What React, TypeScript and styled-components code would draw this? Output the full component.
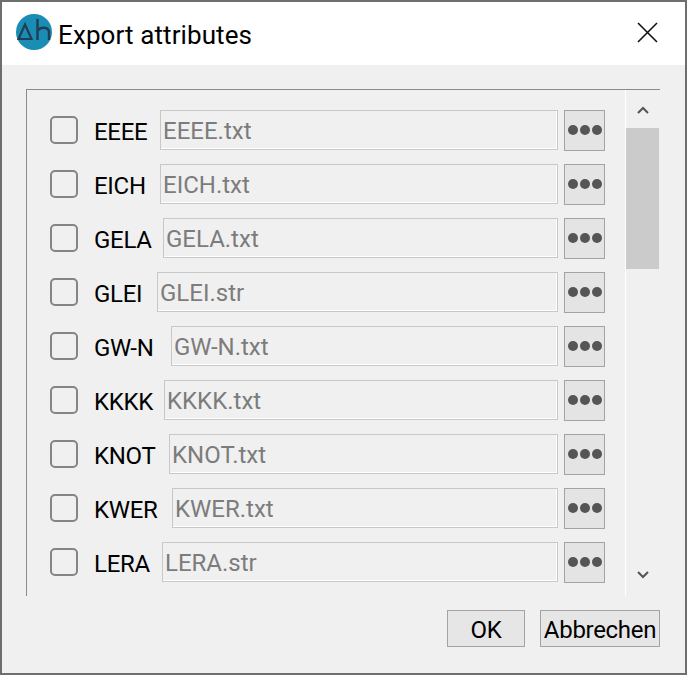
import styled, { createGlobalStyle } from 'styled-components'

const GlobalStyle = createGlobalStyle`
  html, body {
    margin: 0;
    padding: 0;
    background: #6e6e6e;
  }
  * {
    box-sizing: border-box;
  }
`

const Window = styled.div`
  width: 687px;
  height: 675px;
  border: 2px solid #6e6e6e;
  background: #f0f0f0;
  display: flex;
  flex-direction: column;
  overflow: hidden;
  font-family: 'Roboto', 'Noto Sans', sans-serif;
  color: #000;
`

const TitleBar = styled.div`
  height: 63px;
  flex: none;
  background: #fff;
  display: flex;
  align-items: center;
  padding: 0 27px 3px 14px;
  gap: 6px;
`

const Title = styled.span`
  flex: 1;
  font-size: 26px;
  letter-spacing: 0.1px;
  line-height: 32px;
  padding-top: 5px;
`

const Content = styled.div`
  flex: 1;
  min-height: 0;
  display: flex;
  flex-direction: column;
  padding: 24px 25px 0 24px;
`

const ScrollFrame = styled.div`
  height: 507px;
  flex: none;
  display: flex;
  border-top: 1px solid #8a8a94;
  border-left: 1px solid #8a8a94;
`

const List = styled.div`
  flex: 1;
  min-width: 0;
  display: flex;
  flex-direction: column;
  gap: 14px;
  padding: 20px 20px 0 23px;
  overflow: hidden;
`

const Row = styled.div`
  display: flex;
  align-items: center;
  height: 40px;
  flex: none;
`

const Check = styled.span`
  width: 28px;
  height: 28px;
  flex: none;
  border: 2px solid #858585;
  border-radius: 5px;
  margin-right: 16px;
`

const Label = styled.span<{ $width: number }>`
  width: ${({ $width }) => $width}px;
  flex: none;
  font-size: 24px;
  line-height: 30px;
  padding-top: 3px;
  letter-spacing: -0.3px;
  white-space: nowrap;
`

const PathInput = styled.div`
  flex: 1;
  min-width: 0;
  height: 40px;
  border: 1px solid #c8c8c8;
  box-shadow: inset -1px -1px 0 #fff;
  background: #f0f0f0;
  color: #7c7c7c;
  font-size: 24px;
  line-height: 41px;
  padding-left: 2px;
  margin-right: 6px;
`

const DotsButton = styled.div`
  width: 41px;
  height: 41px;
  flex: none;
  border: 1px solid #a3a3a3;
  background: #e4e4e4;
  display: flex;
  align-items: center;
  justify-content: center;
  gap: 2px;
`

const Dot = styled.span`
  width: 10px;
  height: 10px;
  border-radius: 50%;
  background: #555;
`

const ScrollBar = styled.div`
  width: 35px;
  flex: none;
  border-left: 1px solid #fff;
  padding-right: 1px;
  display: flex;
  flex-direction: column;
  align-items: center;
`

const ArrowSlot = styled.div<{ $pad: string }>`
  height: 38px;
  flex: none;
  width: 100%;
  display: flex;
  align-items: center;
  justify-content: center;
  padding: ${({ $pad }) => $pad};
`

const Thumb = styled.div`
  width: 100%;
  height: 141px;
  flex: none;
  background: #cbcbcb;
`

const Spacer = styled.div`
  flex: 1;
`

const Footer = styled.div`
  display: flex;
  justify-content: flex-end;
  gap: 15px;
  padding-top: 14px;
`

const DialogButton = styled.div<{ $width: number }>`
  width: ${({ $width }) => $width}px;
  height: 37px;
  border: 1px solid #a3a3a3;
  background: #e6e6e6;
  font-size: 24px;
  letter-spacing: -0.3px;
  line-height: 38px;
  text-align: center;
  white-space: nowrap;
`

const Logo = () => (
  <svg width="36" height="36" viewBox="0 0 36 36" style={{ flex: 'none' }}>
    <circle cx="18" cy="18" r="18" fill="#1a8db5" />
    <path d="M2.5 25 L9 10.5 L15.5 25 Z" fill="none" stroke="#1f3f55" strokeWidth="2.2" />
    <path d="M21.5 5 V26 M21.5 17 C24 12.5 33 12.5 33 18.5 V26" fill="none" stroke="#1f3f55" strokeWidth="2.4" />
  </svg>
)

const CloseIcon = () => (
  <svg width="21" height="21" viewBox="0 0 21 21">
    <path d="M1 1 L20 20 M20 1 L1 20" stroke="#111" strokeWidth="1.6" fill="none" />
  </svg>
)

const Chevron = ({ up }: { up?: boolean }) => (
  <svg width="12" height="8" viewBox="0 0 12 8">
    <path d={up ? 'M1 7 L6 2 L11 7' : 'M1 1 L6 6 L11 1'} stroke="#555" strokeWidth="2" fill="none" />
  </svg>
)

const attributes = [
  { name: 'EEEE', file: 'EEEE.txt', width: 66 },
  { name: 'EICH', file: 'EICH.txt', width: 66 },
  { name: 'GELA', file: 'GELA.txt', width: 69 },
  { name: 'GLEI', file: 'GLEI.str', width: 63 },
  { name: 'GW-N', file: 'GW-N.txt', width: 77 },
  { name: 'KKKK', file: 'KKKK.txt', width: 70 },
  { name: 'KNOT', file: 'KNOT.txt', width: 75 },
  { name: 'KWER', file: 'KWER.txt', width: 78 },
  { name: 'LERA', file: 'LERA.str', width: 68 },
]

export default function App() {
  return (
    <>
      <GlobalStyle />
      <Window>
        <TitleBar>
          <Logo />
          <Title>Export attributes</Title>
          <CloseIcon />
        </TitleBar>
        <Content>
          <ScrollFrame>
            <List>
              {attributes.map((item) => (
                <Row key={item.name}>
                  <Check />
                  <Label $width={item.width}>{item.name}</Label>
                  <PathInput>{item.file}</PathInput>
                  <DotsButton>
                    <Dot />
                    <Dot />
                    <Dot />
                  </DotsButton>
                </Row>
              ))}
            </List>
            <ScrollBar>
              <ArrowSlot $pad="2px 0 0">
                <Chevron up />
              </ArrowSlot>
              <Thumb />
              <Spacer />
              <ArrowSlot $pad="0 0 4px">
                <Chevron />
              </ArrowSlot>
            </ScrollBar>
          </ScrollFrame>
          <Footer>
            <DialogButton $width={78}>OK</DialogButton>
            <DialogButton $width={120}>Abbrechen</DialogButton>
          </Footer>
        </Content>
      </Window>
    </>
  )
}
